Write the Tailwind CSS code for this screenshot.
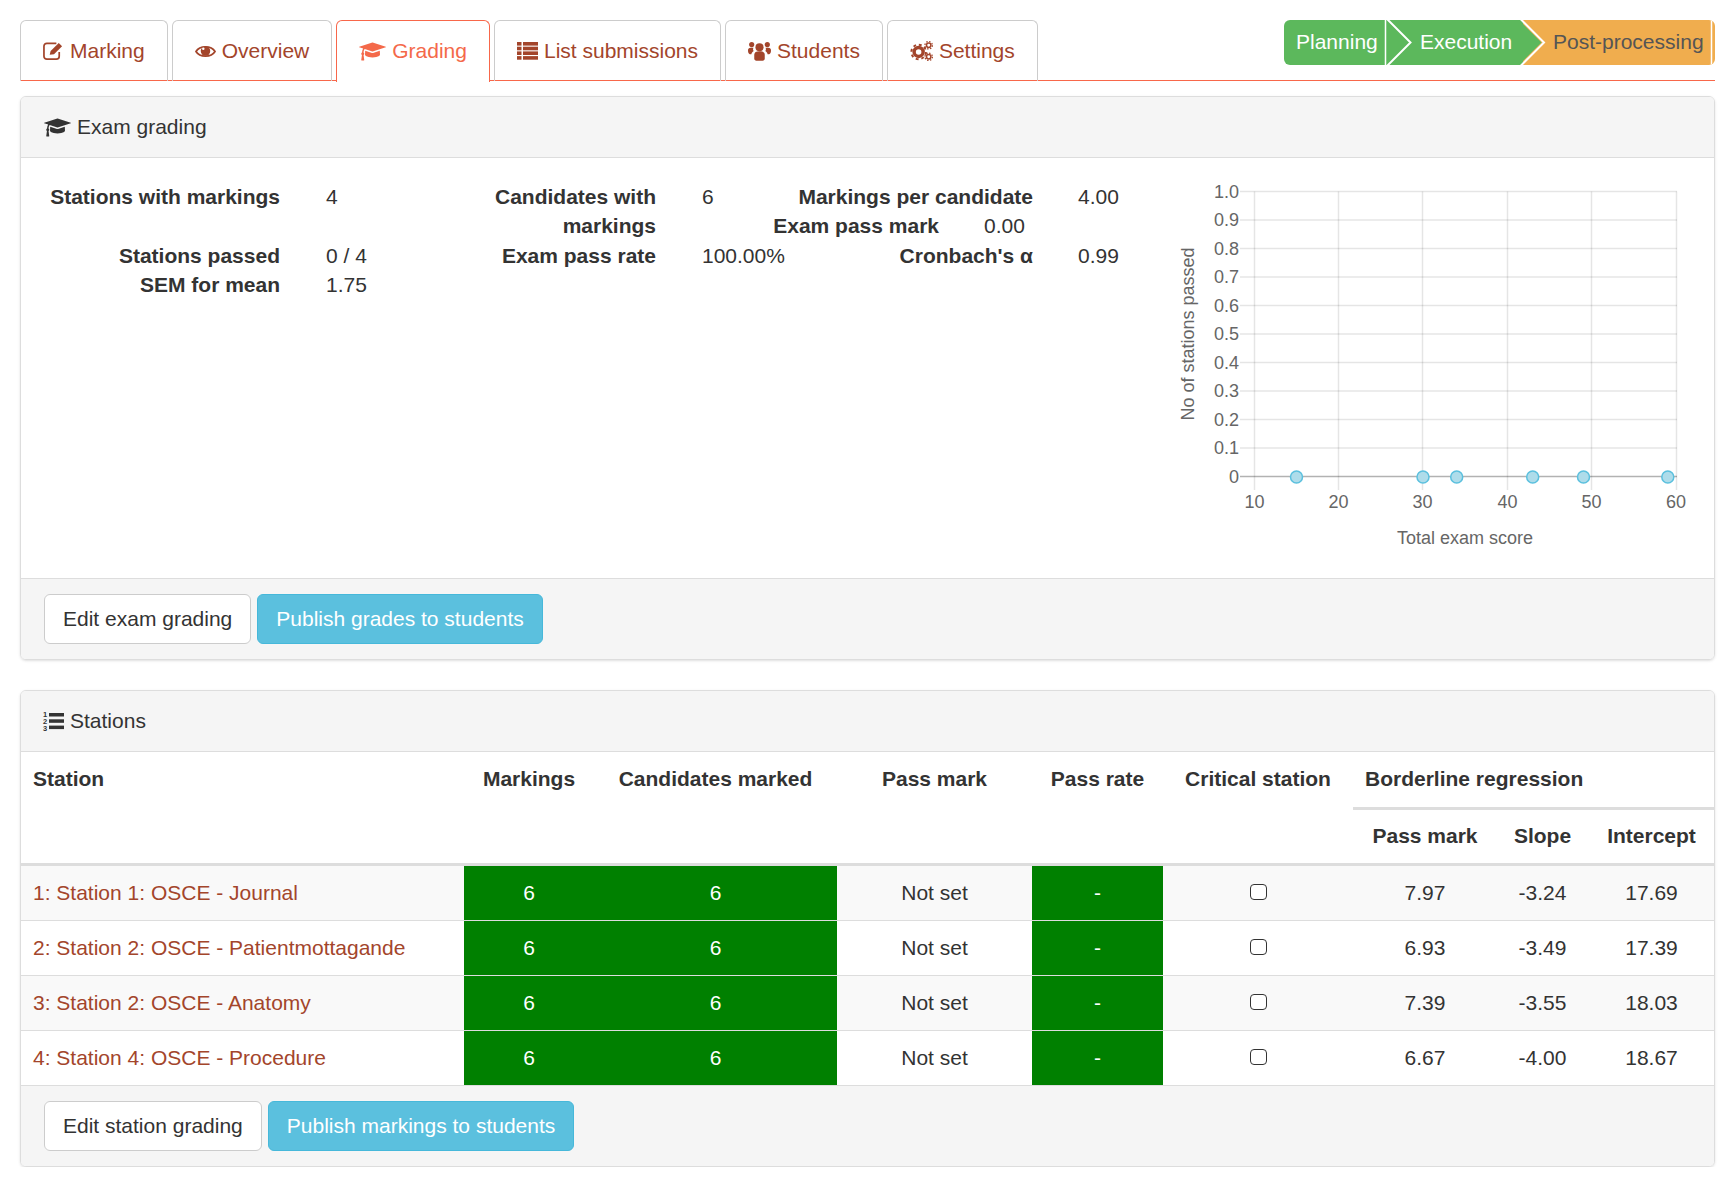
<!DOCTYPE html>
<html lang="en">
<head>
    <meta charset="UTF-8">
    <title>Exam grading</title>
    <script src="https://cdn.jsdelivr.net/npm/@tailwindcss/browser@4"></script>
</head>
<body class="bg-white text-[#333] text-[21px] leading-[29.33px] font-['Liberation_Sans',Arial,sans-serif]">
<div class="pt-5 pl-5 pr-3">

    <!-- Tabs + workflow -->
    <div class="flex justify-between border-b border-[#f8674a] h-[61px]">
        <div class="flex gap-[4px] text-[#a3452b]">
            <a class="flex items-center gap-[6px] h-[61px] px-[22px] border border-b-0 border-[#ccc] rounded-t-[6px]">
                <svg class="w-[21px] h-[20px]" viewBox="0 0 22 20"><path d="M17 11v4.500a3 3 0 0 1-3 3H4a3 3 0 0 1-3-3V5a3 3 0 0 1 3-3h10" fill="none" stroke="currentColor" stroke-width="1.800"/><path d="M7 14l1-4L16.500 1.500 20 5l-8.500 8.500z" fill="currentColor"/></svg>
                Marking
            </a>
            <a class="flex items-center gap-[6px] h-[61px] px-[22px] border border-b-0 border-[#ccc] rounded-t-[6px]">
                <svg class="w-[21px] h-[15px]" viewBox="0 0 22 15"><path d="M1 7.500C5 1 17 1 21 7.500 17 14 5 14 1 7.500z" fill="none" stroke="currentColor" stroke-width="1.800"/><circle cx="11" cy="7" r="5" fill="currentColor"/><circle cx="8.700" cy="4.700" r="1.300" fill="#fff"/></svg>
                Overview
            </a>
            <a class="flex items-center gap-[6px] h-[62px] pb-[1px] px-[22px] border border-b-0 border-[#f8674a] rounded-t-[6px] bg-white text-[#f4694a]">
                <svg class="w-[27px] h-[21px]" viewBox="0 0 2304 1792"><path fill="currentColor" d="M1774 836l18 316q4 69-82 128t-235 93.5-323 34.5-323-34.5-235-93.5-82-128l18-316 574 181q22 7 48 7t48-7zm530-324q0 23-22 31l-1120 352q-4 1-10 1t-10-1l-652-206q-43 34-71 111.5t-34 178.5q63 36 63 109 0 69-58 107l58 433q2 14-8 25-9 11-24 11h-192q-15 0-24-11-10-11-8-25l58-433q-58-38-58-107 0-73 65-111 11-207 98-330l-333-104q-22-8-22-31t22-31l1120-352q4-1 10-1t10 1l1120 352q22 8 22 31z"/></svg>
                Grading
            </a>
            <a class="flex items-center gap-[6px] h-[61px] px-[22px] border border-b-0 border-[#ccc] rounded-t-[6px]">
                <svg class="w-[21px] h-[18px]" viewBox="0 0 21 18" fill="currentColor"><rect y="0" width="4.500" height="3.600"/><rect x="6" y="0" width="15" height="3.600"/><rect y="4.700" width="4.500" height="3.600"/><rect x="6" y="4.700" width="15" height="3.600"/><rect y="9.400" width="4.500" height="3.600"/><rect x="6" y="9.400" width="15" height="3.600"/><rect y="14.100" width="4.500" height="3.600"/><rect x="6" y="14.100" width="15" height="3.600"/></svg>
                List submissions
            </a>
            <a class="flex items-center gap-[6px] h-[61px] px-[22px] border border-b-0 border-[#ccc] rounded-t-[6px]">
                <svg class="w-[23px] h-[22px]" viewBox="0 0 25 22" fill="currentColor"><circle cx="12.500" cy="7" r="4.400"/><circle cx="4" cy="4" r="2.800"/><circle cx="21" cy="4" r="2.800"/><path d="M6.800 19.500V15c0-2.600 2-3.800 5.700-3.800s5.700 1.200 5.700 3.800v4.500c0 1.300-1 2-2.200 2H9c-1.200 0-2.200-.7-2.200-2z"/><path d="M0 10.500C0 8.500 1 7.500 3 7.500h3c-.7 1-.7 2.400.2 3.400-1.500.9-2.300 2.100-2.500 3.500H2c-1.200 0-2-1.500-2-3.900z"/><path d="M25 10.500c0-2-1-3-3-3h-3c.7 1 .7 2.400-.2 3.400 1.500.9 2.300 2.100 2.500 3.500H23c1.200 0 2-1.500 2-3.900z"/></svg>
                Students
            </a>
            <a class="flex items-center gap-[6px] h-[61px] px-[22px] border border-b-0 border-[#ccc] rounded-t-[6px]">
                <svg class="w-[23px] h-[22px]" viewBox="0 0 24 22" fill="none" stroke="currentColor"><circle cx="9" cy="12" r="4.700" stroke-width="3.600"/><circle cx="9" cy="12" r="7.600" stroke-width="2" stroke-dasharray="3 2.970"/><circle cx="19.500" cy="5" r="2.300" stroke-width="1.600"/><circle cx="19.500" cy="5" r="3.900" stroke-width="1.300" stroke-dasharray="1.530 1.530"/><circle cx="19.500" cy="17" r="2.300" stroke-width="1.600"/><circle cx="19.500" cy="17" r="3.900" stroke-width="1.300" stroke-dasharray="1.530 1.530"/></svg>
                Settings
            </a>
        </div>

        <!-- Workflow steps -->
        <div class="relative flex w-[431px] h-[45px] rounded-[6px] overflow-hidden">
            <div class="w-[239px] pb-[1px] bg-[#5cb85c] text-white flex items-center">
                <span class="ml-[12px] w-[124px]">Planning</span>
                <span>Execution</span>
            </div>
            <div class="flex-1 pb-[1px] bg-[#f0ad4e] text-[#555] flex items-center pl-[30px]">Post-processing</div>
            <svg class="absolute inset-0 w-[431px] h-[45px]" viewBox="0 0 431 45" fill="none">
                <path d="M101.500 0V45" stroke="#fff" stroke-width="1.500"/>
                <path d="M103 -1L126.500 22.500 103 46" stroke="#fff" stroke-width="2"/>
                <path d="M235 0L257.500 22.500 235 45z" fill="#5cb85c"/>
                <path d="M236.500 -1L260 22.500 236.500 46" stroke="#fff" stroke-width="2"/>
                <path d="M427.500 0V45" stroke="#fff" stroke-width="1.500"/>
            </svg>
        </div>
    </div>

    <!-- Exam grading panel -->
    <div class="mt-[15px] border border-[#ddd] rounded-[6px] shadow-sm overflow-hidden">
        <div class="flex items-center gap-[6px] h-[61px] px-[23px] bg-[#f5f5f5] border-b border-[#ddd]">
            <svg class="w-[27px] h-[21px]" viewBox="0 0 2304 1792"><path fill="currentColor" d="M1774 836l18 316q4 69-82 128t-235 93.5-323 34.5-323-34.5-235-93.5-82-128l18-316 574 181q22 7 48 7t48-7zm530-324q0 23-22 31l-1120 352q-4 1-10 1t-10-1l-652-206q-43 34-71 111.5t-34 178.5q63 36 63 109 0 69-58 107l58 433q2 14-8 25-9 11-24 11h-192q-15 0-24-11-10-11-8-25l58-433q-58-38-58-107 0-73 65-111 11-207 98-330l-333-104q-22-8-22-31t22-31l1120-352q4-1 10-1t10 1l1120 352q22 8 22 31z"/></svg>
            Exam grading
        </div>
        <div class="flex justify-between h-[420px]">
            <div class="flex pl-[23px] pt-[24px]">
                <dl class="grid grid-cols-[236px_140px] content-start">
                    <dt class="font-bold text-right row-start-1">Stations with markings</dt><dd class="pl-[46px] row-start-1">4</dd>
                    <dt class="font-bold text-right row-start-3">Stations passed</dt><dd class="pl-[46px] row-start-3">0 / 4</dd>
                    <dt class="font-bold text-right row-start-4">SEM for mean</dt><dd class="pl-[46px] row-start-4">1.75</dd>
                    <div class="row-start-2 h-[29.33px]"></div>
                </dl>
                <dl class="grid grid-cols-[236px_141px] content-start">
                    <dt class="font-bold text-right">Candidates with markings</dt><dd class="pl-[46px]">6</dd>
                    <dt class="font-bold text-right">Exam pass rate</dt><dd class="pl-[46px]">100.00%</dd>
                </dl>
                <dl class="grid grid-cols-[236px_100px] content-start">
                    <dt class="font-bold text-right">Markings per candidate</dt><dd class="pl-[45px]">4.00</dd>
                    <dt class="font-bold text-right whitespace-nowrap -ml-[60px] mr-[94px]">Exam pass mark</dt><dd class="pl-[45px] -ml-[94px]">0.00</dd>
                    <dt class="font-bold text-right">Cronbach's α</dt><dd class="pl-[45px]">0.99</dd>
                </dl>
            </div>

            <!-- Scatter chart, viewBox uses page coordinates -->
            <svg class="w-[560px] h-[420px] shrink-0" viewBox="1154 158 560 420" font-size="18" fill="#666">
                <g stroke="#000" stroke-opacity="0.1" stroke-width="1.500">
                    <path d="M1240 191.500H1677M1240 220H1677M1240 248.500H1677M1240 277H1677M1240 305.500H1677M1240 334H1677M1240 362.500H1677M1240 391H1677M1240 419.500H1677M1240 448H1677"/>
                    <path d="M1254.500 191.500V490M1338.500 191.500V490M1422.500 191.500V490M1507.500 191.500V490M1591.500 191.500V490M1676.500 191.500V490"/>
                </g>
                <path d="M1240 476.500H1677" stroke="#000" stroke-opacity="0.3" stroke-width="1.500"/>
                <g text-anchor="end">
                    <text x="1239" y="197.500">1.0</text><text x="1239" y="226">0.9</text><text x="1239" y="254.500">0.8</text><text x="1239" y="283">0.7</text><text x="1239" y="311.500">0.6</text><text x="1239" y="340">0.5</text><text x="1239" y="368.500">0.4</text><text x="1239" y="397">0.3</text><text x="1239" y="425.500">0.2</text><text x="1239" y="454">0.1</text><text x="1239" y="482.500">0</text>
                </g>
                <g text-anchor="middle">
                    <text x="1254.500" y="507.500">10</text><text x="1338.500" y="507.500">20</text><text x="1422.500" y="507.500">30</text><text x="1507.500" y="507.500">40</text><text x="1591.500" y="507.500">50</text><text x="1676" y="507.500">60</text>
                    <text x="1465" y="544">Total exam score</text>
                    <text transform="translate(1194 334) rotate(-90)">No of stations passed</text>
                </g>
                <g fill="#aedcea" stroke="#5bc0de" stroke-width="1.500">
                    <circle cx="1296.500" cy="477" r="6"/><circle cx="1423" cy="477" r="6"/><circle cx="1456.700" cy="477" r="6"/><circle cx="1532.700" cy="477" r="6"/><circle cx="1583.500" cy="477" r="6"/><circle cx="1667.800" cy="477" r="6"/>
                </g>
            </svg>
        </div>
        <div class="flex gap-[6px] pl-[23px] pr-[22px] py-[15px] bg-[#f5f5f5] border-t border-[#ddd]">
            <button class="h-[50px] px-[18px] bg-white border border-[#ccc] rounded-[6px]">Edit exam grading</button>
            <button class="h-[50px] px-[18px] bg-[#5bc0de] border border-[#46b8da] rounded-[6px] text-white">Publish grades to students</button>
        </div>
    </div>

    <!-- Stations panel -->
    <div class="mt-[30px] border border-[#ddd] rounded-[6px] shadow-sm overflow-hidden">
        <div class="flex items-center gap-[6px] h-[61px] px-[22px] bg-[#f5f5f5] border-b border-[#ddd]">
            <svg class="w-[21px] h-[22px] overflow-visible" viewBox="0 0 21 22" fill="currentColor">
                <text x="0" y="7" font-size="7.500" font-weight="700">1</text><text x="0" y="14" font-size="7.500" font-weight="700">2</text><text x="0" y="21" font-size="7.500" font-weight="700">3</text>
                <rect x="6" y="3" width="15" height="3.500"/><rect x="6" y="9.300" width="15" height="3.500"/><rect x="6" y="15.600" width="15" height="3.500"/>
            </svg>
            Stations
        </div>
        <table class="w-full table-fixed">
            <colgroup>
                <col class="w-[443px]"><col class="w-[130px]"><col class="w-[243px]"><col class="w-[195px]"><col class="w-[131px]"><col class="w-[190px]"><col class="w-[144px]"><col class="w-[91px]"><col class="w-[127px]">
            </colgroup>
            <thead>
                <tr class="h-[56px]">
                    <th rowspan="2" class="align-top pt-[12px] pl-[12px] text-left border-b-[3px] border-[#ddd]">Station</th>
                    <th rowspan="2" class="align-top pt-[12px] text-center border-b-[3px] border-[#ddd]">Markings</th>
                    <th rowspan="2" class="align-top pt-[12px] text-center border-b-[3px] border-[#ddd]">Candidates marked</th>
                    <th rowspan="2" class="align-top pt-[12px] text-center border-b-[3px] border-[#ddd]">Pass mark</th>
                    <th rowspan="2" class="align-top pt-[12px] text-center border-b-[3px] border-[#ddd]">Pass rate</th>
                    <th rowspan="2" class="align-top pt-[12px] text-center border-b-[3px] border-[#ddd]">Critical station</th>
                    <th colspan="3" class="align-top pt-[12px] pl-[12px] text-left border-b-[3px] border-[#ddd]">Borderline regression</th>
                </tr>
                <tr class="h-[56px]">
                    <th class="text-center border-b-[3px] border-[#ddd]">Pass mark</th>
                    <th class="text-center border-b-[3px] border-[#ddd]">Slope</th>
                    <th class="text-center border-b-[3px] border-[#ddd]">Intercept</th>
                </tr>
            </thead>
            <tbody class="text-center">
                <tr class="h-[56px] bg-[#f9f9f9]">
                    <td class="pl-[12px] text-left text-[#a3452b]">1: Station 1: OSCE - Journal</td>
                    <td class="bg-[#008000] text-white">6</td><td class="bg-[#008000] text-white">6</td>
                    <td>Not set</td><td class="bg-[#008000] text-white">-</td>
                    <td><input type="checkbox" class="appearance-none w-[17px] h-[16px] border-[1.5px] border-[#333] rounded-[4px] bg-white"></td>
                    <td>7.97</td><td>-3.24</td><td>17.69</td>
                </tr>
                <tr class="h-[55px] border-t border-[#ddd]">
                    <td class="pl-[12px] text-left text-[#a3452b]">2: Station 2: OSCE - Patientmottagande</td>
                    <td class="bg-[#008000] text-white">6</td><td class="bg-[#008000] text-white">6</td>
                    <td>Not set</td><td class="bg-[#008000] text-white">-</td>
                    <td><input type="checkbox" class="appearance-none w-[17px] h-[16px] border-[1.5px] border-[#333] rounded-[4px] bg-white"></td>
                    <td>6.93</td><td>-3.49</td><td>17.39</td>
                </tr>
                <tr class="h-[55px] border-t border-[#ddd] bg-[#f9f9f9]">
                    <td class="pl-[12px] text-left text-[#a3452b]">3: Station 2: OSCE - Anatomy</td>
                    <td class="bg-[#008000] text-white">6</td><td class="bg-[#008000] text-white">6</td>
                    <td>Not set</td><td class="bg-[#008000] text-white">-</td>
                    <td><input type="checkbox" class="appearance-none w-[17px] h-[16px] border-[1.5px] border-[#333] rounded-[4px] bg-white"></td>
                    <td>7.39</td><td>-3.55</td><td>18.03</td>
                </tr>
                <tr class="h-[55px] border-t border-[#ddd]">
                    <td class="pl-[12px] text-left text-[#a3452b]">4: Station 4: OSCE - Procedure</td>
                    <td class="bg-[#008000] text-white">6</td><td class="bg-[#008000] text-white">6</td>
                    <td>Not set</td><td class="bg-[#008000] text-white">-</td>
                    <td><input type="checkbox" class="appearance-none w-[17px] h-[16px] border-[1.5px] border-[#333] rounded-[4px] bg-white"></td>
                    <td>6.67</td><td>-4.00</td><td>18.67</td>
                </tr>
            </tbody>
        </table>
        <div class="flex gap-[6px] pl-[23px] pr-[22px] py-[15px] bg-[#f5f5f5] border-t border-[#ddd]">
            <button class="h-[50px] px-[18px] bg-white border border-[#ccc] rounded-[6px]">Edit station grading</button>
            <button class="h-[50px] px-[18px] bg-[#5bc0de] border border-[#46b8da] rounded-[6px] text-white">Publish markings to students</button>
        </div>
    </div>
</div>
</body>
</html>
